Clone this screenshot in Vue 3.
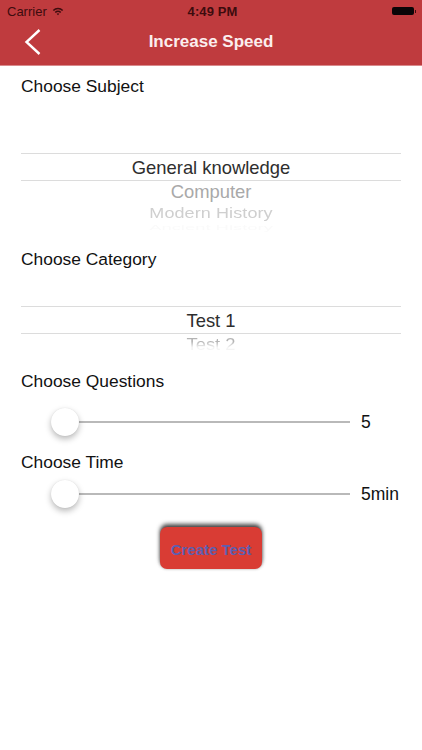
<script setup>
const sliders = [
  { label: 'Choose Questions', value: '5' },
  { label: 'Choose Time', value: '5min' },
]
</script>

<template>
  <div class="screen">
    <header class="header">
      <div class="status">
        <div class="status-left">
          <span class="carrier">Carrier</span>
          <svg class="wifi" width="12" height="9" viewBox="0 0 14 11">
            <path d="M0.6 3.6 A9 9 0 0 1 13.4 3.6 L12 5 A7 7 0 0 0 2 5 Z" />
            <path d="M3 6 A5.6 5.6 0 0 1 11 6 L9.6 7.4 A3.6 3.6 0 0 0 4.4 7.4 Z" />
            <path d="M5.4 8.4 A2.3 2.3 0 0 1 8.6 8.4 L7 10.2 Z" />
          </svg>
        </div>
        <span class="clock">4:49 PM</span>
        <div class="battery"><i class="battery-cap"></i></div>
      </div>
      <div class="nav">
        <svg class="back" width="18" height="28" viewBox="0 0 18 28">
          <path d="M15.5 2 L2.5 14 L15.5 26" />
        </svg>
        <h1 class="title">Increase Speed</h1>
      </div>
    </header>

    <main class="content">
      <p class="label first">Choose Subject</p>
      <div class="picker subject">
        <div class="row selected">General knowledge</div>
        <div class="row computer">Computer</div>
        <div class="row modern">Modern History</div>
        <div class="row ancient">Ancient History</div>
      </div>

      <p class="label">Choose Category</p>
      <div class="picker category">
        <div class="row selected">Test 1</div>
        <div class="row test2">Test 2</div>
      </div>

      <div v-for="s in sliders" :key="s.label" class="slider-block">
        <p class="label">{{ s.label }}</p>
        <div class="slider">
          <div class="track"><span class="thumb"></span></div>
          <span class="value">{{ s.value }}</span>
        </div>
      </div>

      <div class="actions">
        <button class="create">Create Test</button>
      </div>
    </main>
  </div>
</template>

<style>
html, body { margin: 0; background: #fff; }
</style>

<style scoped>
.screen {
  width: 422px;
  height: 750px;
  overflow: hidden;
  background: #fff;
  font-family: "Liberation Sans", Arial, sans-serif;
  color: #111;
}
.header {
  height: 65px;
  background: #bf3b3e;
  border-bottom: 1px solid #d98a8c;
}
.status {
  height: 20px;
  box-sizing: border-box;
  padding: 2px 8px 0 7px;
  display: grid;
  grid-template-columns: 1fr auto 1fr;
  align-items: center;
  color: #3d0c0e;
}
.status-left { display: flex; align-items: center; gap: 5px; }
.carrier { font-size: 13px; }
.wifi { fill: #3d0c0e; }
.clock { margin-left: 4px; font-size: 13px; font-weight: 700; letter-spacing: 0.1px; }
.battery {
  justify-self: end;
  position: relative;
  width: 22px;
  height: 8px;
  background: #0a0507;
  border-radius: 2px;
}
.battery-cap {
  position: absolute;
  right: -2px;
  top: 2.5px;
  width: 1.5px;
  height: 3px;
  background: #3d0c0e;
}
.nav {
  height: 45px;
  display: flex;
  align-items: center;
  justify-content: center;
  position: relative;
}
.back {
  position: absolute;
  left: 24px;
  top: 8px;
  fill: none;
  stroke: #fff;
  stroke-width: 2.4;
}
.title {
  margin: 0 0 2px;
  color: #fbeeee;
  font-size: 17px;
  font-weight: 700;
}
.content { padding: 0 21px; }
.label {
  margin: 0;
  height: 22px;
  line-height: 22px;
  font-size: 17.4px;
  color: #111;
}
.label.first { margin-top: 9px; }
.picker {
  overflow: hidden;
  text-align: center;
  color: #333;
}
.picker.subject { height: 135px; padding-top: 56px; box-sizing: border-box; margin-bottom: 16px; }
.picker.category { height: 83px; padding-top: 36px; box-sizing: border-box; margin-bottom: 17px; }
.row { font-size: 18.4px; }
.selected {
  height: 28px;
  line-height: 27px;
  box-sizing: border-box;
  border-top: 1px solid #dcdcdc;
  border-bottom: 1px solid #dcdcdc;
  color: #2e2e2e;
}
.computer {
  height: 22px;
  line-height: 22px;
  color: #a9a9a9;
}
.modern {
  height: 20px;
  line-height: 20px;
  color: #cfcfcf;
  transform: scaleY(0.8);
  font-size: 18px;
  letter-spacing: 0.1px;
}
.ancient {
  height: 10px;
  line-height: 10px;
  color: #fafafa;
  transform: scaleY(0.4);
}
.test2 {
  height: 20px;
  line-height: 21px;
  transform: scaleY(0.85);
  color: transparent;
  background: linear-gradient(#b4b4b4 35%, #f4f4f4 70%);
  background-clip: text;
  -webkit-background-clip: text;
}
.slider-block { margin-bottom: 15px; }
.slider {
  display: flex;
  align-items: center;
  height: 28px;
  margin-top: 16px;
  padding-left: 30px;
}
.slider-block + .slider-block .slider { margin-top: 7px; }
.slider-block + .slider-block { margin-top: 1px; }
.track {
  position: relative;
  width: 299px;
  height: 2px;
  background: #b9b9b9;
}
.thumb {
  position: absolute;
  left: 0;
  top: -13px;
  width: 28px;
  height: 28px;
  border-radius: 50%;
  background: #fff;
  box-shadow: 0 3px 6px rgba(0, 0, 0, 0.28), 0 0 1px rgba(0, 0, 0, 0.12);
}
.value {
  margin-left: 11px;
  font-size: 17.5px;
  color: #111;
}
.actions {
  display: flex;
  justify-content: center;
  margin-top: 19px;
}
.create {
  width: 102px;
  height: 42px;
  padding: 3px 0 0;
  border: 0;
  border-radius: 7px;
  background: #d93c34;
  color: #5c5fb0;
  font-family: inherit;
  font-size: 15px;
  font-weight: 700;
  box-shadow: 0 -3px 4px rgba(0, 0, 0, 0.7), 0 0 3px rgba(0, 0, 0, 0.25);
}
</style>
